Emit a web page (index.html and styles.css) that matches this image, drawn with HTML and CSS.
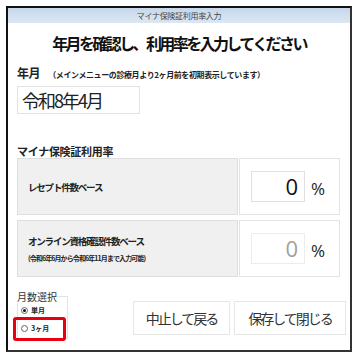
FILE: index.html
```html
<!DOCTYPE html>
<html lang="ja">
<head>
  <meta charset="UTF-8" />
  <title>マイナ保険証利用率入力</title>
  <link rel="stylesheet" href="styles.css">
</head>
<body>
  <div class="window">
    <div class="titlebar">マイナ保険証利用率入力</div>
    <h2>年月を確認し、利用率を入力してください</h2>

    <p class="month-label">年月 <span class="note">（メインメニューの診療月より2ヶ月前を初期表示しています）</span></p>
    <div class="month-box">令和8年4月</div>

    <p class="rate-label">マイナ保険証利用率</p>
    <div class="rate-row">
      <div class="rate-name">レセプト件数ベース</div>
      <div class="rate-cell">
        <span class="rate-input">0</span>
        <span class="pct">%</span>
      </div>
    </div>
    <div class="rate-row">
      <div class="rate-name">
        オンライン資格確認件数ベース
        <small>(令和6年6月から令和6年11月まで入力可能)</small>
      </div>
      <div class="rate-cell">
        <span class="rate-input disabled">0</span>
        <span class="pct">%</span>
      </div>
    </div>

    <div class="footer">
      <div class="group">
        <span class="group-title">月数選択</span>
        <label class="radio"><span class="dot checked"></span>単月</label>
        <label class="radio"><span class="dot"></span>3ヶ月</label>
        <div class="highlight"></div>
      </div>
      <div class="buttons">
        <button>中止して戻る</button>
        <button>保存して閉じる</button>
      </div>
    </div>
  </div>
</body>
</html>
```

FILE: styles.css
```css
body {
  margin: 0;
  background: #fff;
  font-family: "Noto Sans CJK JP", "Noto Sans", sans-serif;
  color: #222;
}
.window {
  margin: 6px 0 0 6px;
  width: 346px;
  height: 346px;
  box-sizing: border-box;
  border: 2px solid #111;
  border-right-color: #333;
  border-bottom-color: #333;
  padding: 0 0 0 9px;
  position: relative;
}
.titlebar {
  margin-left: -9px;
  height: 15px;
  line-height: 15px;
  font-size: 8px;
  letter-spacing: -0.3px;
  text-align: center;
  color: #444;
  background: linear-gradient(#c6d7ea, #dce7f3);
}
h2 {
  margin: 8px 0 0 -9px;
  font-size: 16px;
  letter-spacing: -2.6px;
  line-height: 24px;
  text-align: center;
  color: #111;
}
.month-label {
  margin: 10px 0 0;
  font-size: 12px;
  letter-spacing: -0.5px;
  line-height: 16px;
  font-weight: bold;
}
.note {
  font-size: 8px;
  margin-left: 6px;
  letter-spacing: -0.4px;
}
.month-box {
  margin-top: 3px;
  width: 123px;
  height: 28px;
  box-sizing: border-box;
  border: 1px solid #e3e3e3;
  padding-left: 4px;
  font-size: 18px;
  letter-spacing: -2px;
  line-height: 26px;
}
.rate-label {
  margin: 31px 0 0;
  font-size: 11px;
  letter-spacing: -0.3px;
  line-height: 13px;
  font-weight: bold;
}
.rate-row {
  display: flex;
  width: 323px;
  height: 57px;
  margin-bottom: 5px;
}
.rate-name {
  width: 221px;
  box-sizing: border-box;
  background: #f0f0f0;
  border: 1px solid #dedede;
  padding-left: 10px;
  font-size: 9.5px;
  letter-spacing: -1.2px;
  font-weight: bold;
  display: flex;
  flex-direction: column;
  justify-content: center;
  line-height: 14px;
}
.rate-name small {
  font-size: 7px;
  letter-spacing: -0.9px;
  margin-top: 5px;
  line-height: 10px;
}
.rate-cell {
  flex: 1;
  margin-left: 1px;
  box-sizing: border-box;
  border: 1px solid #e3e3e3;
  display: flex;
  align-items: center;
  padding-left: 11px;
}
.rate-input {
  width: 54px;
  height: 31px;
  box-sizing: border-box;
  border: 1px solid #e0e0e0;
  text-align: right;
  padding-right: 6px;
  font-family: "Open Sans", sans-serif;
  font-size: 22px;
  line-height: 29px;
  color: #111;
}
.rate-input.disabled {
  color: #a0a0a0;
  border-color: #ececec;
}
.pct {
  margin: 4px 0 0 6px;
  font-size: 17px;
  font-family: "Open Sans", sans-serif;
}
.footer {
  display: flex;
  margin-top: 19px;
}
.group {
  position: relative;
  width: 51px;
  height: 43px;
  box-sizing: border-box;
  border: 1px solid #e3e3e3;
  padding: 7px 0 0 3px;
}
.group-title {
  position: absolute;
  top: -6px;
  left: -1px;
  background: #fff;
  font-size: 10px;
  line-height: 12px;
  color: #333;
}
.radio {
  display: flex;
  align-items: center;
  font-size: 7px;
  font-weight: bold;
  height: 12px;
  margin-bottom: 6px;
}
.dot {
  width: 7px;
  height: 7px;
  border: 1px solid #666;
  border-radius: 50%;
  box-sizing: border-box;
  margin-right: 3px;
  position: relative;
}
.dot.checked::after {
  content: "";
  position: absolute;
  left: 1px;
  top: 1px;
  width: 3px;
  height: 3px;
  border-radius: 50%;
  background: #111;
}
.highlight {
  position: absolute;
  left: -5px;
  top: 20px;
  width: 53px;
  height: 24px;
  box-sizing: border-box;
  border: 3px solid #e60012;
  border-radius: 3px;
}
.buttons {
  display: flex;
  gap: 4px;
  margin: 5px 0 0 65px;
}
button {
  width: 97px;
  height: 34px;
  background: #fff;
  border: 1px solid #e6e6e6;
  font-family: "Noto Sans CJK JP", sans-serif;
  font-size: 14px;
  letter-spacing: -2px;
  color: #333;
  padding: 0;
}
button + button {
  width: 112px;
}
```
